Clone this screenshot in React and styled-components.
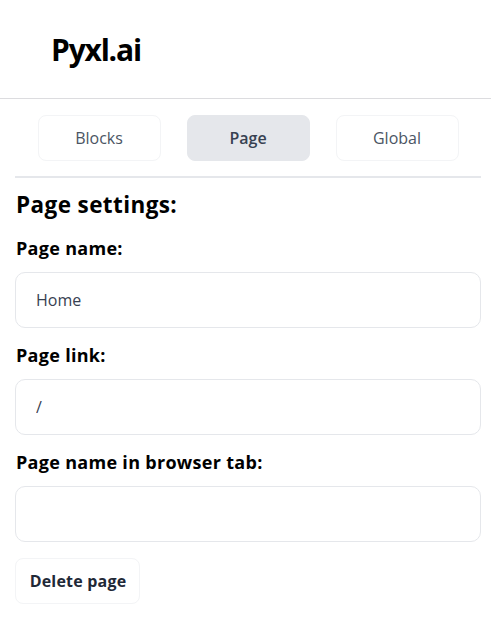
import React from "react";
import styled, { createGlobalStyle } from "styled-components";

const Global = createGlobalStyle`
  html, body { margin: 0; padding: 0; background: #ffffff; }
  body { font-family: "Open Sans", "Noto Sans", Arial, sans-serif; color: #000; }
  * { box-sizing: border-box; }
`;

const Page = styled.div`
  width: 491px;
  min-height: 625px;
  background: #fff;
`;

const Header = styled.header`
  height: 99px;
  display: flex;
  align-items: center;
  padding: 1px 0 0 51px;
  border-bottom: 1px solid #dcdcdf;
`;

const Logo = styled.h1`
  margin: 0;
  font-size: 30px;
  line-height: 36px;
  font-weight: 700;
  letter-spacing: -1.2px;
  color: #000;
`;

const Body = styled.div`
  padding: 16px 10px 0 15px;
`;

const Tabs = styled.nav`
  display: flex;
  justify-content: center;
  gap: 26px;
  padding-bottom: 15px;
  border-bottom: 2px solid #e5e7eb;
`;

const Tab = styled.button`
  width: 123px;
  height: 46px;
  border-radius: 8px;
  border: 1px solid ${(p) => (p.$active ? "#e5e7eb" : "#f3f4f6")};
  background: ${(p) => (p.$active ? "#e5e7eb" : "#ffffff")};
  color: ${(p) => (p.$active ? "#374151" : "#4b5563")};
  font-family: inherit;
  font-size: 16px;
  font-weight: ${(p) => (p.$active ? 600 : 400)};
  padding: 0;
  cursor: pointer;
`;

const Title = styled.h2`
  margin: 12px 0 0 1px;
  font-size: 22.5px;
  line-height: 30px;
  font-weight: 700;
  letter-spacing: 0.4px;
`;

const Label = styled.label`
  display: block;
  margin: ${(p) => (p.$first ? "14px" : "13px")} 0 10px 1px;
  font-size: 18px;
  line-height: 28px;
  font-weight: 700;
  letter-spacing: 0.3px;
`;

const Input = styled.input`
  display: block;
  width: 100%;
  height: 56px;
  border: 1px solid #e5e7eb;
  border-radius: 10px;
  padding: 0 20px;
  font-family: inherit;
  font-size: 16px;
  color: #374151;
  background: #fff;
  outline: none;
`;

const DeleteButton = styled.button`
  margin-top: 16px;
  width: 125px;
  height: 46px;
  border: 1px solid #f3f4f6;
  border-radius: 8px;
  background: #fff;
  color: #1f2937;
  font-family: inherit;
  font-size: 16px;
  font-weight: 700;
  letter-spacing: 0.2px;
  padding: 0 0 0 1px;
  cursor: pointer;
`;

export default function App() {
  return (
    <Page>
      <Global />
      <Header>
        <Logo>Pyxl.ai</Logo>
      </Header>
      <Body>
        <Tabs>
          <Tab>Blocks</Tab>
          <Tab $active>Page</Tab>
          <Tab>Global</Tab>
        </Tabs>
        <Title>Page settings:</Title>
        <Label $first htmlFor="pname">Page name:</Label>
        <Input id="pname" defaultValue="Home" />
        <Label htmlFor="plink">Page link:</Label>
        <Input id="plink" defaultValue="/" />
        <Label htmlFor="ptab">Page name in browser tab:</Label>
        <Input id="ptab" defaultValue="" />
        <DeleteButton>Delete page</DeleteButton>
      </Body>
    </Page>
  );
}
